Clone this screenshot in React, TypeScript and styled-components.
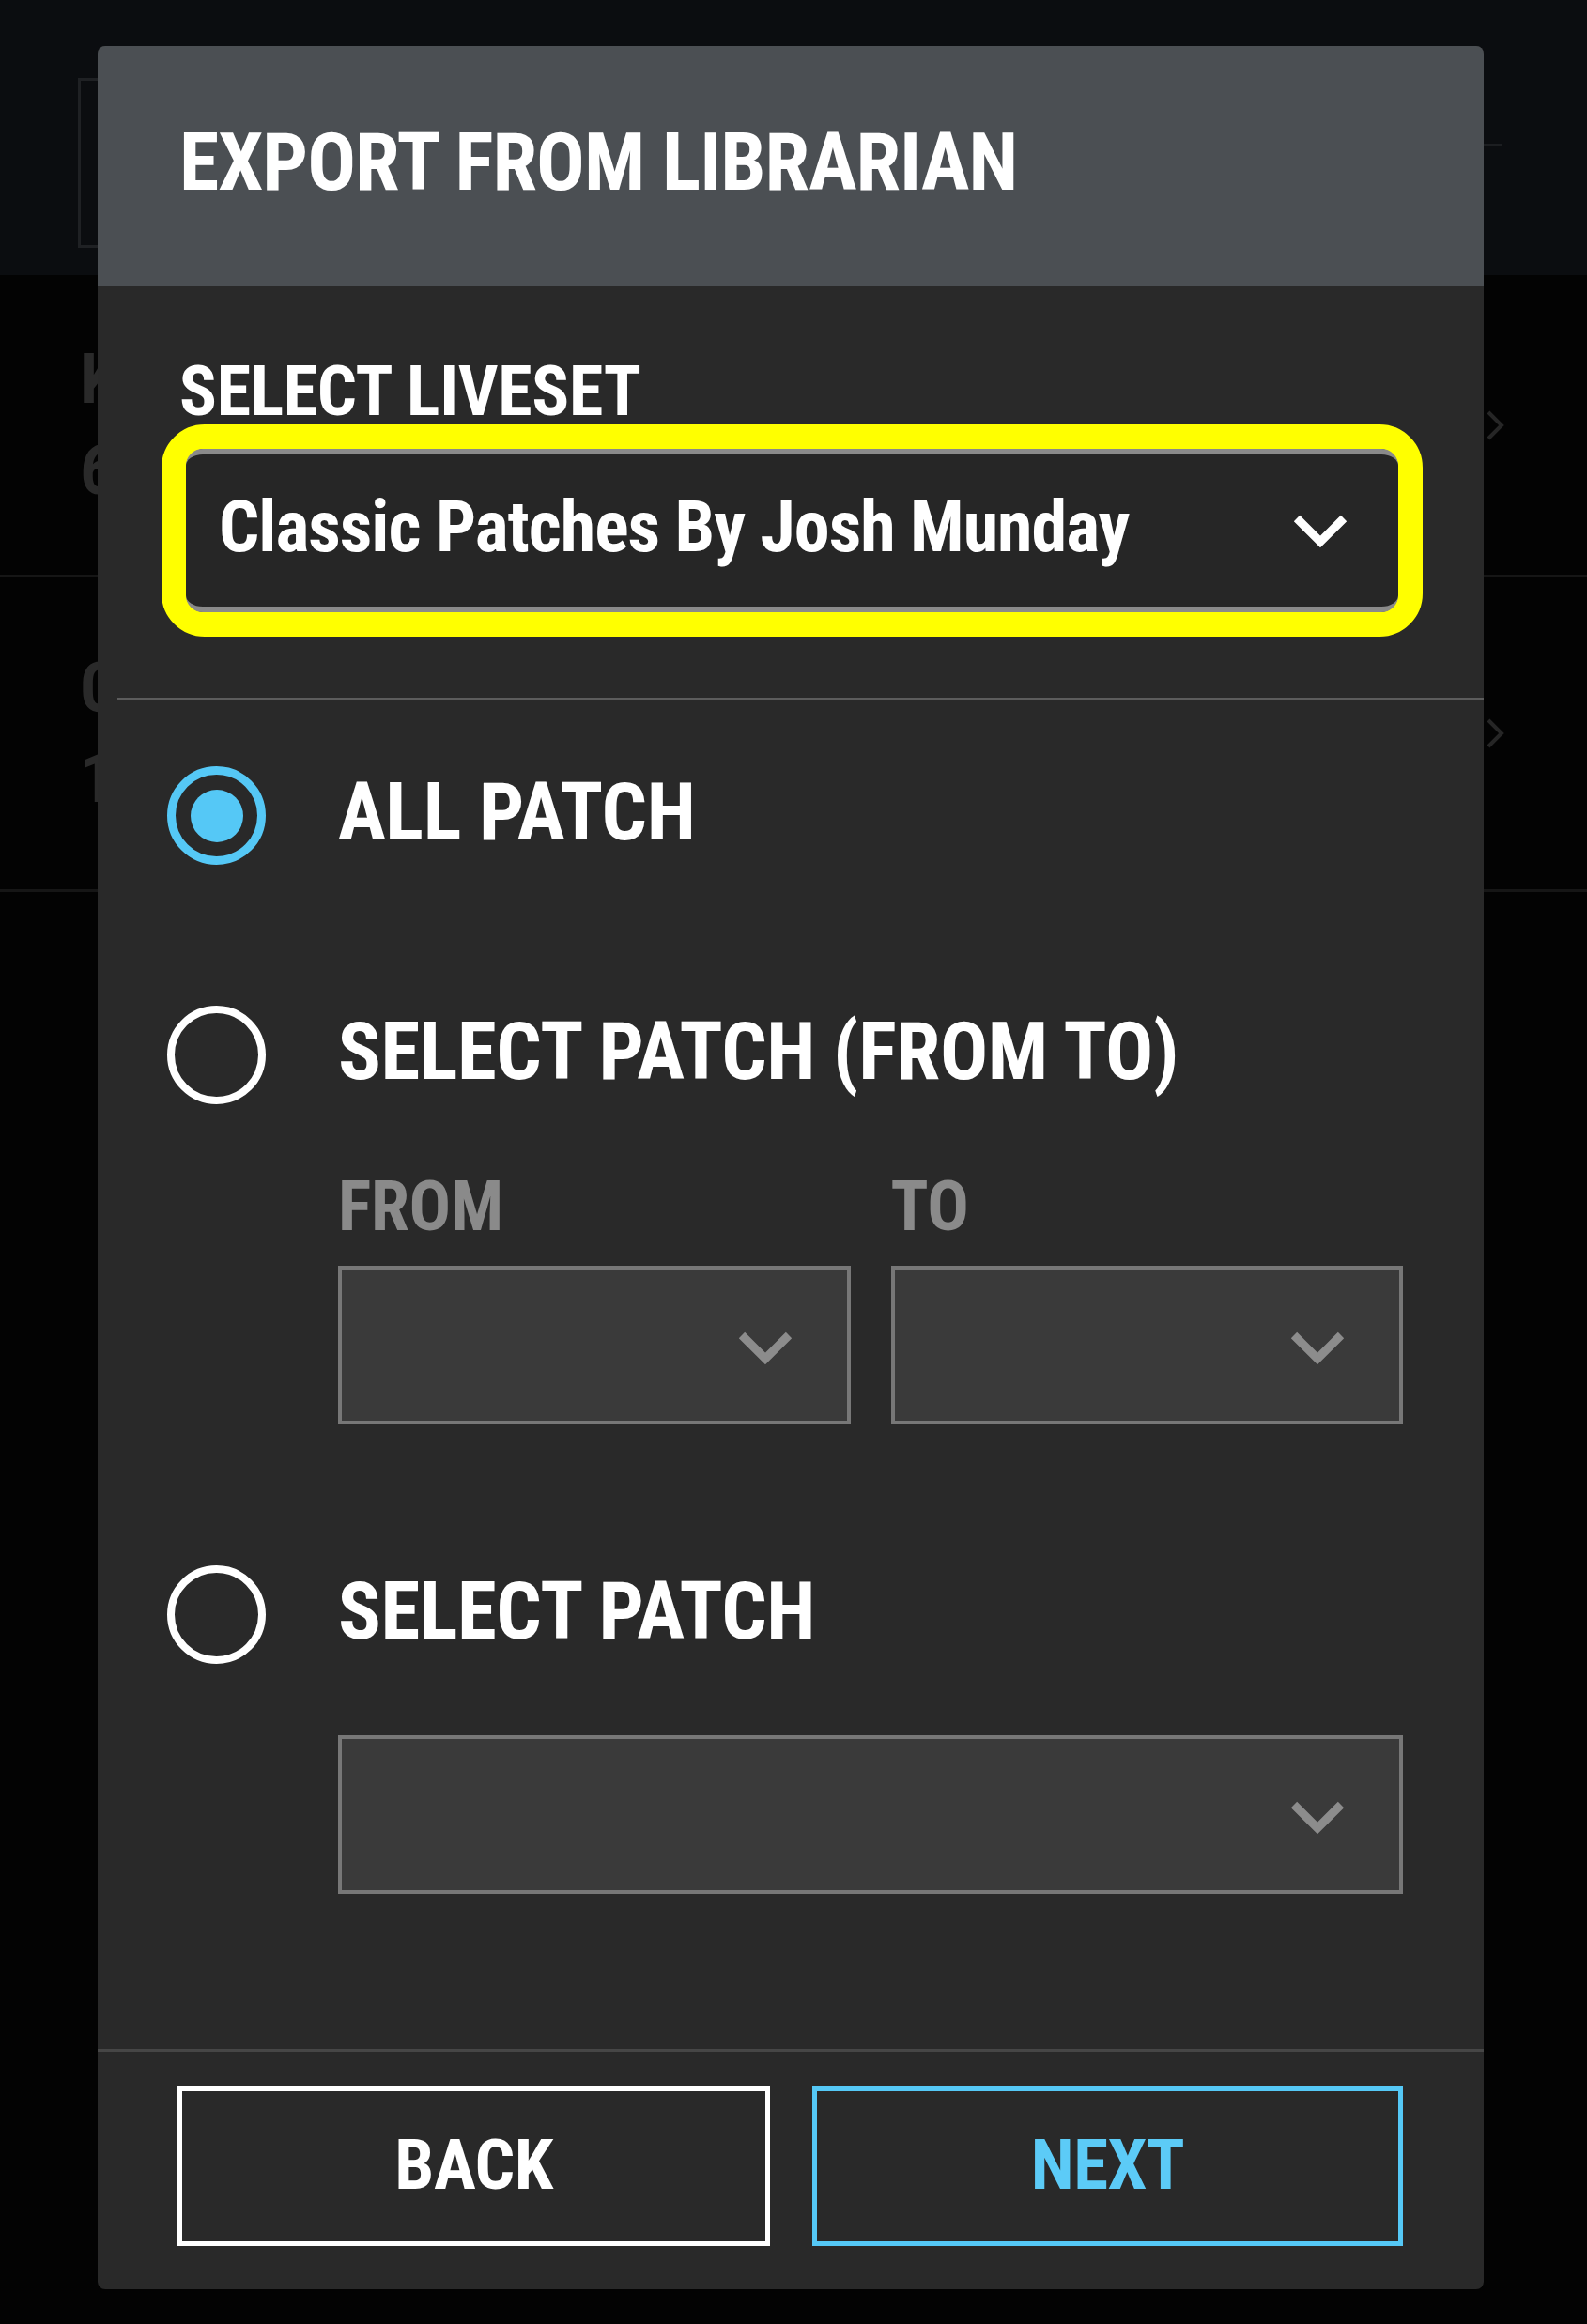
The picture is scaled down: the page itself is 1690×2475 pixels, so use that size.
import styled, { createGlobalStyle } from "styled-components"

const font = `"Roboto Condensed", "Liberation Sans Narrow", "DejaVu Sans Condensed", Roboto, sans-serif`

const GlobalStyle = createGlobalStyle`
  html, body {
    margin: 0;
    padding: 0;
    background: #030303;
  }
  body {
    font-family: ${font};
    -webkit-font-smoothing: antialiased;
  }
`

const Page = styled.div`
  position: relative;
  width: 1690px;
  height: 2475px;
  overflow: hidden;
  background: #030303;
`

const TopBand = styled.div`
  height: 293px;
  background: #0b0d10;
  display: flex;
  align-items: flex-start;
  justify-content: space-between;
  padding: 83px 90px 0 83px;
  box-sizing: border-box;
`
const GhostBox = styled.div`
  width: 160px;
  height: 175px;
  border: 3px solid #1f2124;
`
const GhostDash = styled.div`
  width: 30px;
  height: 3px;
  background: #1c1e21;
  margin-top: 70px;
`
const Row = styled.div<{ $h: number }>`
  height: ${(p) => p.$h}px;
  border-bottom: 3px solid #161616;
  box-sizing: border-box;
  display: flex;
  align-items: center;
  justify-content: space-between;
  padding: 0 88px 0 85px;
`
const GhostText = styled.div`
  font-family: ${font};
  font-weight: 700;
  font-size: 74px;
  line-height: 1.3;
  color: #2a2a2a;
`
const GhostChevron = styled.svg`
  width: 20px;
  height: 34px;
`

const Modal = styled.div`
  position: absolute;
  left: 104px;
  top: 49px;
  width: 1476px;
  height: 2389px;
  background: #292929;
  border-radius: 8px;
  overflow: hidden;
  display: flex;
  flex-direction: column;
`
const Header = styled.div`
  height: 256px;
  flex: none;
  background: #4b4f53;
  display: flex;
  align-items: center;
  padding: 0 87px;
`
const Title = styled.div`
  font-weight: 700;
  font-size: 86px;
  line-height: 1;
  letter-spacing: -1px;
  color: #ffffff;
  margin-top: -8px;
`
const Body = styled.div`
  flex: 1;
  padding: 75px 86px 0 87px;
`
const Label = styled.div<{ $muted?: boolean }>`
  font-weight: 700;
  font-size: 74px;
  line-height: 1;
  letter-spacing: -0.3px;
  color: ${(p) => (p.$muted ? "#8a8a8a" : "#ffffff")};
`
const Highlight = styled.div`
  margin: -2px -21px 0 -19px;
  border: 26px solid #ffff00;
  border-radius: 46px;
`
const LivesetSelect = styled.div`
  height: 174px;
  box-sizing: border-box;
  border-top: 6px solid #8a8a8a;
  border-bottom: 6px solid #8a8a8a;
  border-radius: 18px;
  background: #262626;
  display: flex;
  align-items: center;
  justify-content: space-between;
  padding: 0 52px 0 35px;
`
const SelectText = styled.div`
  font-weight: 700;
  font-size: 76px;
  line-height: 1;
  letter-spacing: -1px;
  color: #ffffff;
  margin-top: -8px;
`
const Divider = styled.div`
  height: 3px;
  background: #5c5c5c;
  margin: 65px -86px 0 -66px;
`
const OptionRow = styled.label<{ $gap: number }>`
  display: flex;
  align-items: center;
  gap: 77px;
  margin: ${(p) => p.$gap}px 0 0 -13px;
  cursor: pointer;
`
const Radio = styled.span<{ $checked?: boolean }>`
  width: 105px;
  height: 105px;
  flex: none;
  box-sizing: border-box;
  border-radius: 50%;
  border: ${(p) => (p.$checked ? "9px solid #55c8f6" : "8px solid #ffffff")};
  display: flex;
  align-items: center;
  justify-content: center;
  &::after {
    content: "";
    display: ${(p) => (p.$checked ? "block" : "none")};
    width: 56px;
    height: 56px;
    border-radius: 50%;
    background: #55c8f6;
  }
`
const OptionText = styled.span`
  font-weight: 700;
  font-size: 85px;
  line-height: 1;
  letter-spacing: -0.4px;
  color: #ffffff;
  margin-top: -6px;
`
const SubBlock = styled.div<{ $gap: number }>`
  margin: ${(p) => p.$gap}px 0 0 169px;
`
const RangeGrid = styled.div`
  display: grid;
  grid-template-columns: 1fr 1fr;
  column-gap: 43px;
  row-gap: 26px;
`
const Dropdown = styled.div`
  height: 169px;
  box-sizing: border-box;
  border: 4px solid #777777;
  background: #3a3a3a;
  display: flex;
  align-items: center;
  justify-content: flex-end;
  padding: 4px 56px 0 0;
`
const Footer = styled.div`
  flex: none;
  border-top: 3px solid #464646;
  padding: 37px 86px 46px 85px;
  display: grid;
  grid-template-columns: 631px 1fr;
  column-gap: 45px;
`
const Button = styled.button<{ $primary?: boolean }>`
  height: 170px;
  box-sizing: border-box;
  background: transparent;
  border: 5px solid ${(p) => (p.$primary ? "#55c8f6" : "#ffffff")};
  color: ${(p) => (p.$primary ? "#5ccbf7" : "#ffffff")};
  font-family: ${font};
  font-weight: 700;
  font-size: 75px;
  line-height: 1;
  letter-spacing: -0.5px;
  padding: 0 0 4px;
  cursor: pointer;
`

const Chevron = ({ color }: { color: string }) => (
  <svg width={62} height={38} viewBox="0 0 62 38">
    <polyline points="6,6 31,31 56,6" fill="none" stroke={color} strokeWidth="9" strokeLinejoin="miter" />
  </svg>
)

const RightArrow = () => (
  <GhostChevron viewBox="0 0 20 34">
    <polyline points="3,3 17,17 3,31" fill="none" stroke="#262626" strokeWidth="4" />
  </GhostChevron>
)

const App = () => {
  return (
    <Page>
      <GlobalStyle />
      <TopBand>
        <GhostBox />
        <GhostDash />
      </TopBand>
      <Row $h={322}>
        <div>
          <GhostText>K</GhostText>
          <GhostText>6</GhostText>
        </div>
        <RightArrow />
      </Row>
      <Row $h={335}>
        <div>
          <GhostText>C</GhostText>
          <GhostText>1</GhostText>
        </div>
        <RightArrow />
      </Row>

      <Modal>
        <Header>
          <Title>EXPORT FROM LIBRARIAN</Title>
        </Header>
        <Body>
          <Label>SELECT LIVESET</Label>
          <Highlight>
            <LivesetSelect>
              <SelectText>Classic Patches By Josh Munday</SelectText>
              <Chevron color="#ffffff" />
            </LivesetSelect>
          </Highlight>
          <Divider />

          <OptionRow $gap={70}>
            <Radio $checked />
            <OptionText>ALL PATCH</OptionText>
          </OptionRow>

          <OptionRow $gap={150}>
            <Radio />
            <OptionText>SELECT PATCH (FROM TO)</OptionText>
          </OptionRow>
          <SubBlock $gap={72}>
            <RangeGrid>
              <Label $muted>FROM</Label>
              <Label $muted>TO</Label>
              <Dropdown>
                <Chevron color="#8c8c8c" />
              </Dropdown>
              <Dropdown>
                <Chevron color="#8c8c8c" />
              </Dropdown>
            </RangeGrid>
          </SubBlock>

          <OptionRow $gap={150}>
            <Radio />
            <OptionText>SELECT PATCH</OptionText>
          </OptionRow>
          <SubBlock $gap={76}>
            <Dropdown>
              <Chevron color="#8c8c8c" />
            </Dropdown>
          </SubBlock>
        </Body>
        <Footer>
          <Button>BACK</Button>
          <Button $primary>NEXT</Button>
        </Footer>
      </Modal>
    </Page>
  )
}

export default App
